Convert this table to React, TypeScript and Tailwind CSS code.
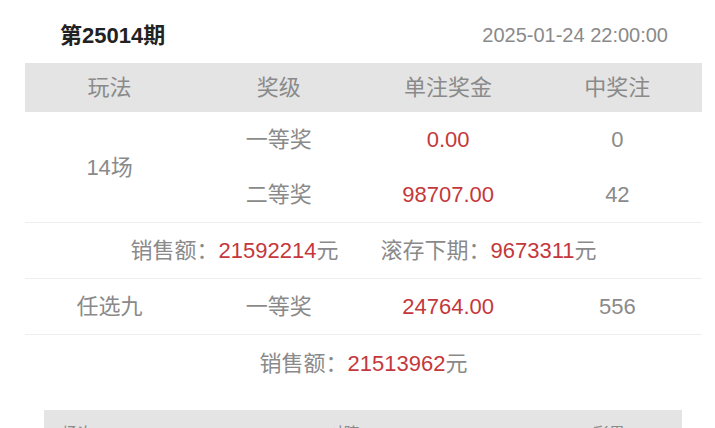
const font = { fontFamily: '"Liberation Sans", "Noto Sans CJK SC", sans-serif' };

const red = 'text-[#c4383c]';

export default function App() {
  return (
    <div className="h-[428px] w-[715px] overflow-hidden bg-white" style={font}>
      <div className="flex h-[63px] items-center justify-between pl-[60px] pr-[47px] pt-[7px]">
        <h1 className="text-[22px] font-bold text-[#222]">第25014期</h1>
        <p className="text-[20px] text-[#8a8a8a]">2025-01-24 22:00:00</p>
      </div>

      <div className="ml-[25px] w-[677px] text-[22px] text-[#8a8a8a]">
        <div className="grid h-[49px] grid-cols-4 items-center bg-[#e4e4e4] text-center">
          <span>玩法</span>
          <span>奖级</span>
          <span>单注奖金</span>
          <span>中奖注</span>
        </div>

        <div className="grid grid-cols-4 border-b border-[#eeeeee] text-center">
          <div className="row-span-2 flex items-center justify-center">14场</div>
          <Cell>一等奖</Cell>
          <Cell className={red}>0.00</Cell>
          <Cell>0</Cell>
          <Cell>二等奖</Cell>
          <Cell className={red}>98707.00</Cell>
          <Cell>42</Cell>
        </div>

        <div className="flex h-[56px] items-center justify-center gap-[42px] border-b border-[#eeeeee]">
          <span>销售额：<span className={red}>21592214</span>元</span>
          <span>滚存下期：<span className={red}>9673311</span>元</span>
        </div>

        <div className="grid grid-cols-4 border-b border-[#eeeeee] text-center">
          <Cell>任选九</Cell>
          <Cell>一等奖</Cell>
          <Cell className={red}>24764.00</Cell>
          <Cell>556</Cell>
        </div>

        <div className="flex h-[56px] items-center justify-center">
          <span>销售额：<span className={red}>21513962</span>元</span>
        </div>
      </div>

      <div className="ml-[44px] mt-[19px] flex h-[40px] w-[638px] items-start justify-between bg-[#e4e4e4] pl-[18px] pr-[57px] pt-[12px] text-[16px] text-[#8a8a8a]">
        <span>场次</span>
        <span>对阵</span>
        <span>彩果</span>
      </div>
    </div>
  );
}

function Cell({ children, className = '' }: { children: React.ReactNode; className?: string }) {
  return <div className={`flex h-[55px] items-center justify-center ${className}`}>{children}</div>;
}
